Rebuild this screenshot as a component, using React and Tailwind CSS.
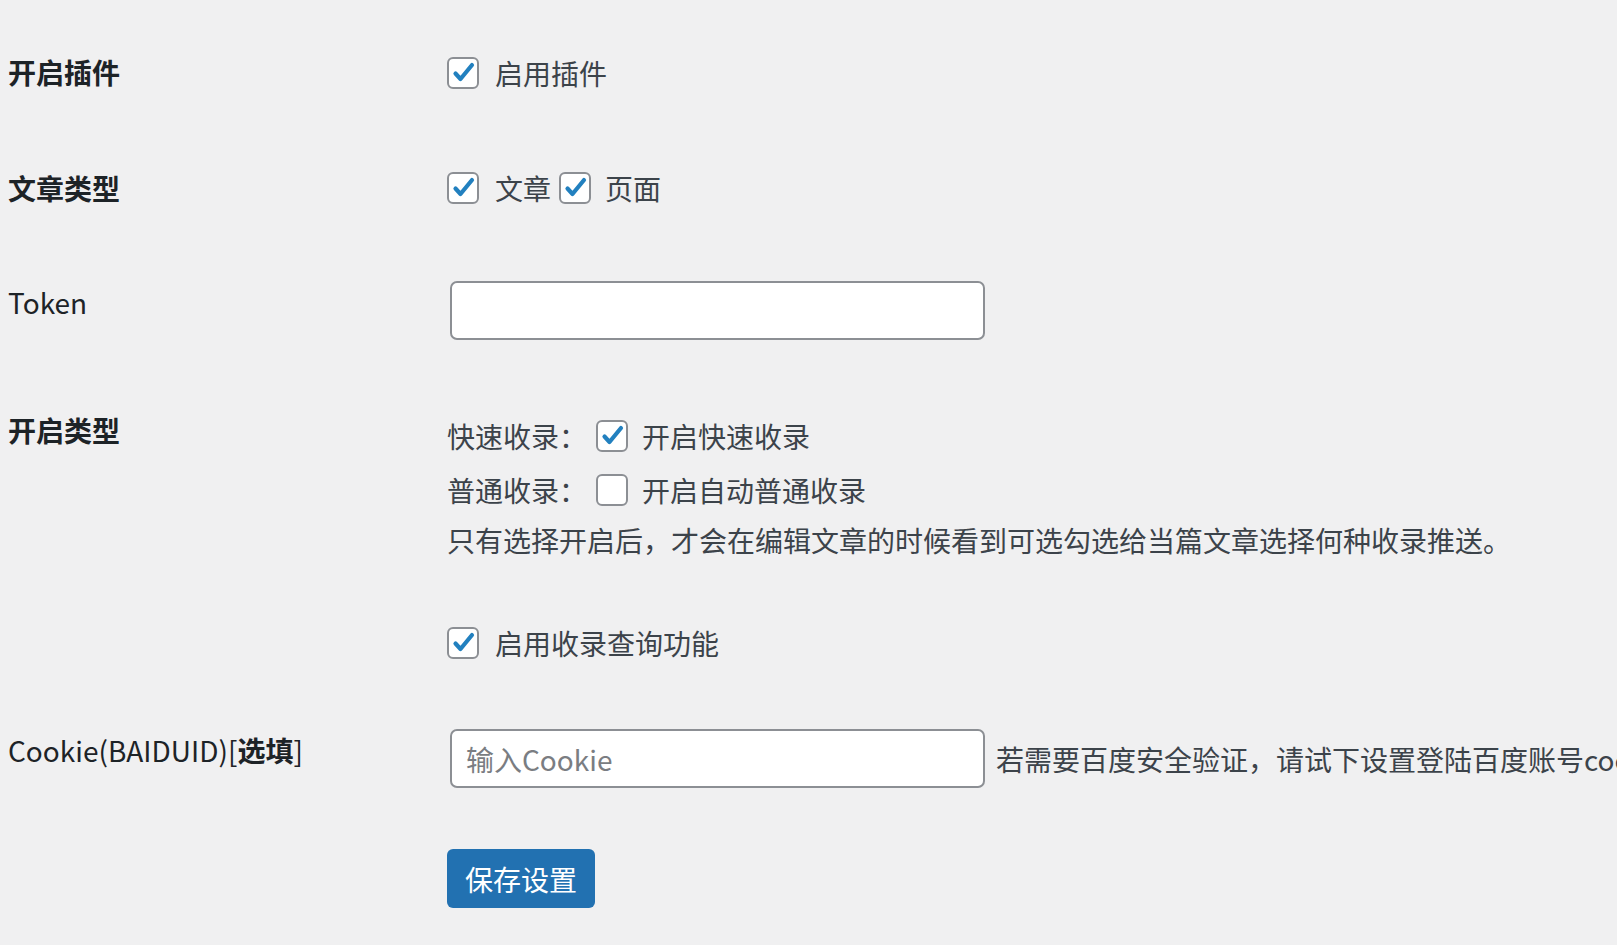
import React from "react";

const Check = ({ checked }) => (
  <span className="relative inline-flex h-[32px] w-[32px] shrink-0 rounded-[6px] border-2 border-[#8c8f94] bg-white">
    {checked && (
      <svg viewBox="0 0 32 32" className="absolute -left-[2px] -top-[2px] h-[32px] w-[32px]">
        <path
          d="M8.5 16.5 L13.5 22 L25 8"
          fill="none"
          stroke="#2280bf"
          strokeWidth="4.2"
          strokeLinecap="round"
          strokeLinejoin="round"
        />
      </svg>
    )}
  </span>
);

const Label = ({ children, className = "" }) => (
  <div className={`w-[447px] shrink-0 pl-2 text-[#1d2327] leading-[40px] ${className}`}>{children}</div>
);

export default function App() {
  return (
    <div
      className="h-[945px] w-[1617px] overflow-hidden bg-[#f0f0f1] text-[28px] text-[#3c434a] whitespace-nowrap"
      style={{ fontFamily: '"Noto Sans CJK SC", "Noto Sans", sans-serif' }}
    >
      {/* 开启插件 */}
      <div className="flex pt-[52px]">
        <Label className="font-bold">开启插件</Label>
        <div className="flex h-[40px] items-center gap-[16px] pt-[1px]">
          <Check checked />
          <span>启用插件</span>
        </div>
      </div>

      {/* 文章类型 */}
      <div className="flex pt-[76px]">
        <Label className="font-bold">文章类型</Label>
        <div className="flex h-[40px] items-center">
          <Check checked />
          <span className="ml-[16px] mr-[8px]">文章</span>
          <Check checked />
          <span className="ml-[14px]">页面</span>
        </div>
      </div>

      {/* Token */}
      <div className="flex pt-[73px]">
        <Label className="pt-[1px]">Token</Label>
        <input
          type="text"
          className="ml-[3px] h-[59px] w-[535px] rounded-[7px] border-2 border-[#8c8f94] bg-white px-4 outline-none"
        />
      </div>

      {/* 开启类型 */}
      <div className="flex pt-[70px]">
        <Label className="font-bold">开启类型</Label>
        <div className="flex flex-col pt-[6px]">
          <div className="flex h-[40px] items-center">
            <span className="w-[149px]">快速收录：</span>
            <Check checked />
            <span className="ml-[14px]">开启快速收录</span>
          </div>
          <div className="mt-[14px] flex h-[40px] items-center">
            <span className="w-[149px]">普通收录：</span>
            <Check />
            <span className="ml-[14px]">开启自动普通收录</span>
          </div>
          <div className="mt-[10px] leading-[40px]">
            只有选择开启后，才会在编辑文章的时候看到可选勾选给当篇文章选择何种收录推送。
          </div>
        </div>
      </div>

      {/* 收录查询 */}
      <div className="flex pt-[63px]">
        <Label> </Label>
        <div className="flex h-[40px] items-center gap-[16px]">
          <Check checked />
          <span>启用收录查询功能</span>
        </div>
      </div>

      {/* Cookie */}
      <div className="flex pt-[66px]">
        <Label className="pt-[1px]">
          Cookie(BAIDUID)[<span className="font-bold">选填</span>]
        </Label>
        <div className="flex items-center">
          <input
            type="text"
            placeholder="输入Cookie"
            className="ml-[3px] h-[59px] w-[535px] rounded-[7px] border-2 border-[#8c8f94] bg-white px-[14px] outline-none placeholder:text-[#7a7d82]"
          />
          <span className="ml-[11px]">若需要百度安全验证，请试下设置登陆百度账号cookie中的BAIDUID值</span>
        </div>
      </div>

      {/* 保存 */}
      <div className="flex pt-[61px]">
        <div className="w-[447px] shrink-0" />
        <button className="h-[59px] w-[148px] rounded-[6px] bg-[#2271b1] text-[28px] text-white">保存设置</button>
      </div>
    </div>
  );
}
